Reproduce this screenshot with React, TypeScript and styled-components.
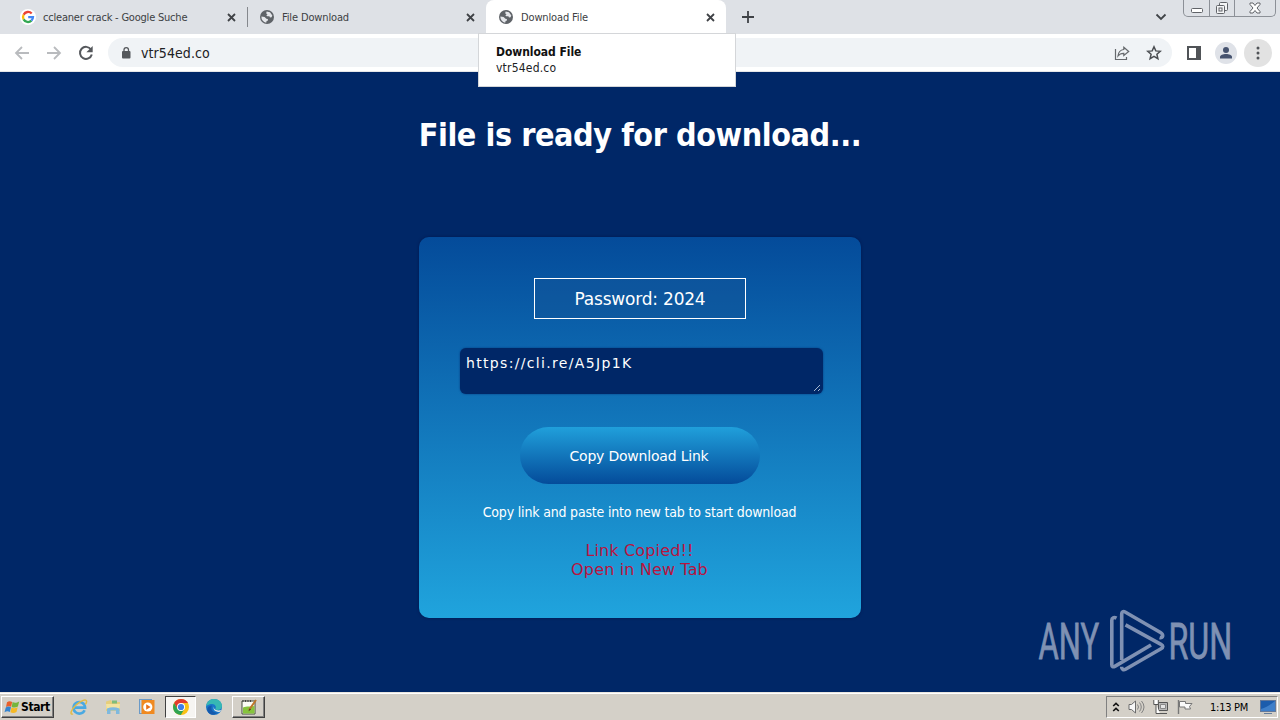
import { Fragment } from "react";
import styled, { createGlobalStyle } from "styled-components";

const GlobalStyle = createGlobalStyle`
  * {
    box-sizing: border-box;
  }
  body {
    margin: 0;
    overflow: hidden;
  }
  svg {
    display: block;
    flex: none;
  }
`;

const Screen = styled.div`
  width: 1280px;
  height: 720px;
  display: flex;
  flex-direction: column;
  position: relative;
  overflow: hidden;
  background-color: #002767;
  font-family: "DejaVu Sans Condensed", "DejaVu Sans", sans-serif;
`;

const TabStrip = styled.div`
  height: 34px;
  flex: none;
  display: flex;
  align-items: flex-start;
  padding-left: 8px;
  background-color: #dee1e6;
`;

const Tab = styled.div<{ $active?: boolean; $width: number }>`
  width: ${(props) => props.$width}px;
  height: 34px;
  display: flex;
  align-items: center;
  padding: 0 10px 0 12px;
  border-radius: 8px 8px 0 0;
  background-color: ${(props) => (props.$active ? "#ffffff" : "transparent")};
`;

const TabTitle = styled.span<{ $spacing: number }>`
  flex: 1;
  margin-left: 7px;
  padding-top: 1px;
  font-size: 11px;
  line-height: 14px;
  white-space: nowrap;
  color: #3c4043;
  letter-spacing: ${(props) => props.$spacing}px;
`;

const Separator = styled.div`
  width: 1px;
  height: 20px;
  margin: 7px -1px 0 0;
  background-color: #85888d;
`;

const NewTab = styled.div`
  padding: 11px 0 0 16px;
`;

const WindowTools = styled.div`
  margin-left: auto;
  display: flex;
  gap: 16px;
  padding-right: 4px;
`;

const ChevronBox = styled.div`
  padding-top: 12px;
`;

const WindowButtons = styled.div`
  display: flex;
  width: 93px;
  height: 17px;
  border: 1px solid #8c9097;
  border-top: 0;
  border-radius: 0 0 5px 5px;
`;

const WindowButton = styled.div<{ $width: number }>`
  width: ${(props) => props.$width}px;
  display: flex;
  justify-content: center;
  padding-top: 1px;
  & + & {
    border-left: 1px solid #8c9097;
  }
`;

const Toolbar = styled.div`
  height: 38px;
  flex: none;
  display: flex;
  align-items: center;
  padding: 0 8px 0 14px;
  background-color: #ffffff;
  border-bottom: 1px solid #e4e6e8;
`;

const NavButtons = styled.div`
  display: flex;
  gap: 16px;
`;

const Omnibox = styled.div`
  width: 1065px;
  height: 29px;
  margin-left: 14px;
  display: flex;
  align-items: center;
  padding: 0 10px 0 12px;
  border-radius: 15px;
  background-color: #f0f3f6;
`;

const Url = styled.span`
  flex: 1;
  margin-left: 9px;
  font-size: 14px;
  letter-spacing: 0.08px;
  color: #202124;
`;

const OmniboxIcons = styled.div`
  display: flex;
  gap: 16px;
`;

const ToolbarIcons = styled.div`
  display: flex;
  align-items: center;
  gap: 13px;
  padding-left: 14px;
`;

const RoundButton = styled.div<{ $size: number; $color: string }>`
  width: ${(props) => props.$size}px;
  height: ${(props) => props.$size}px;
  display: flex;
  align-items: center;
  justify-content: center;
  border-radius: 50%;
  background-color: ${(props) => props.$color};
`;

const MenuButton = styled(RoundButton)`
  margin-left: -6px;
`;

const HoverCard = styled.div`
  position: absolute;
  top: 33px;
  left: 478px;
  width: 258px;
  height: 54px;
  padding: 10px 17px;
  border: 1px solid #d4d6d9;
  background-color: #ffffff;
  color: #202124;
`;

const HoverTitle = styled.div`
  font-size: 12px;
  line-height: 16px;
  font-weight: bold;
  letter-spacing: -0.05px;
  color: #111;
`;

const HoverUrl = styled.div`
  font-size: 12px;
  line-height: 16px;
  letter-spacing: 0.2px;
`;

const Page = styled.main`
  flex: 1;
  display: flex;
  flex-direction: column;
  align-items: center;
  font-family: "DejaVu Sans", sans-serif;
  color: #ffffff;
`;

const Heading = styled.h1`
  margin: 43px 0 0;
  font-family: "DejaVu Sans Condensed", "DejaVu Sans", sans-serif;
  font-size: 32px;
  line-height: 40px;
  font-weight: bold;
  white-space: nowrap;
  letter-spacing: -0.43px;
`;

const Card = styled.section`
  width: 442px;
  height: 381px;
  margin-top: 82px;
  padding-top: 41px;
  display: flex;
  flex-direction: column;
  align-items: center;
  border-radius: 10px;
  background: linear-gradient(#044b9a, #20a4dd);
  box-shadow: 0 0 3px rgba(0, 20, 70, 0.7);
`;

const Password = styled.div`
  width: 212px;
  height: 41px;
  border: 1px solid #ffffff;
  background-color: rgba(20, 84, 150, 0.45);
  text-align: center;
  font-size: 17px;
  line-height: 40px;
  white-space: nowrap;
  letter-spacing: -0.2px;
`;

const LinkBox = styled.div`
  width: 363px;
  height: 46px;
  margin: 29px 0 0 3px;
  padding: 6px 2px 2px 6px;
  display: flex;
  border-radius: 6px;
  background-color: #002767;
  box-shadow: 0 0 2px #063576;
  font-size: 14px;
  line-height: 18px;
  letter-spacing: 1.33px;
`;

const Resizer = styled.div`
  margin-left: auto;
  align-self: flex-end;
`;

const CopyButton = styled.button`
  width: 240px;
  height: 57px;
  margin-top: 33px;
  padding: 0 2px 0 0;
  border: 0;
  border-radius: 29px;
  background: linear-gradient(#20a0db, #044b9a);
  color: #ffffff;
  font-family: inherit;
  font-size: 14px;
  letter-spacing: -0.2px;
`;

const Hint = styled.p`
  margin: 18px 0 0;
  padding-right: 1px;
  font-family: "DejaVu Sans Condensed", "DejaVu Sans", sans-serif;
  font-size: 14px;
  line-height: 20px;
  white-space: nowrap;
  letter-spacing: -0.18px;
`;

const Copied = styled.p`
  margin: 19px 0 0;
  padding-right: 1px;
  text-align: center;
  font-size: 16px;
  line-height: 19px;
  letter-spacing: 0.15px;
  color: #b8143f;
`;

const Watermark = styled.div`
  position: absolute;
  left: 1036px;
  top: 608px;
`;

const Taskbar = styled.footer`
  height: 28px;
  flex: none;
  display: flex;
  align-items: center;
  padding: 2px 2px 1px 1px;
  border-top: 1px solid #e9e6e0;
  background-color: #d4d0c8;
  box-shadow: inset 0 1px #ffffff;
`;

const StartButton = styled.div`
  width: 53px;
  height: 22px;
  display: flex;
  align-items: center;
  padding-left: 2px;
  border: 1px solid;
  border-color: #ffffff #404040 #404040 #ffffff;
  box-shadow: inset -1px -1px #808080;
  font-size: 12px;
  font-weight: bold;
  letter-spacing: -0.4px;
  color: #000000;
`;

const QuickLaunch = styled.div`
  display: flex;
  align-items: center;
  padding-left: 8px;
`;

const TaskButton = styled.div<{ $look?: "pressed" | "raised" }>`
  width: 34px;
  height: 22px;
  display: flex;
  align-items: center;
  justify-content: center;
  border: 1px solid transparent;
  ${(props) =>
    props.$look === "pressed" &&
    `
    width: 31px;
    margin-left: 1px;
    margin-right: 1px;
    border-color: #404040 #ffffff #ffffff #404040;
    background-color: #f6f5f2;
  `}
  ${(props) =>
    props.$look === "raised" &&
    `
    width: 33px;
    margin-left: 1px;
    border-color: #ffffff #404040 #404040 #ffffff;
    box-shadow: inset -1px -1px #808080;
  `}
`;

const Tray = styled.div`
  width: 172px;
  height: 22px;
  margin-left: auto;
  display: flex;
  align-items: center;
  padding-left: 5px;
  border: 1px solid;
  border-color: #808080 #ffffff #ffffff #808080;
`;

const TrayIcons = styled.div`
  display: flex;
  align-items: center;
  gap: 8px;
`;

const Clock = styled.span`
  width: 42px;
  margin: 0 8px 0 17px;
  font-size: 11px;
  letter-spacing: -0.25px;
  white-space: nowrap;
  color: #000000;
`;

const GoogleIcon = () => (
  <svg width="16" height="16" viewBox="0 0 16 16">
    <circle cx="8" cy="8" r="8" fill="#fff" />
    <g fill="none" strokeWidth="2.3">
      <path d="M11.7 4.5A5 5 0 0 0 3.6 5.7" stroke="#ea4335" />
      <path d="M3.6 5.7A5 5 0 0 0 3.6 10.4" stroke="#fbbc05" />
      <path d="M3.6 10.4A5 5 0 0 0 11.4 11.7" stroke="#34a853" />
      <path d="M11.4 11.7A5 5 0 0 0 13 8.1H8.2" stroke="#4285f4" />
    </g>
  </svg>
);

const GlobeIcon = () => (
  <svg width="16" height="16" viewBox="0 0 16 16">
    <circle cx="8" cy="8" r="7" fill="#5f6368" />
    <path
      d="M7.6 2.6 11 3.2 13.3 6.4 12.6 8.3 11 8.6 10.4 7.3H8.3L7.3 6.3 8.6 5.2 7.2 4.6ZM2.4 7.5 5.6 7.9 7.4 9.7 8.8 10 9 11.5 7.6 12 7.2 13.7A5.8 5.8 0 0 1 2.4 7.5Z"
      fill="#e4e6ea"
    />
  </svg>
);

const CloseIcon = () => (
  <svg width="11" height="11" viewBox="0 0 11 11">
    <path d="m2 2 7 7M9 2 2 9" stroke="#3f4246" strokeWidth="1.8" />
  </svg>
);

const ArrowIcon = ({ flip }: { flip?: boolean }) => (
  <svg width="16" height="16" viewBox="0 0 16 16">
    <path
      d="M15 8H2.5M8 2 2 8l6 6"
      transform={flip ? "translate(16 0) scale(-1 1)" : undefined}
      fill="none"
      stroke="#b9bbbe"
      strokeWidth="1.8"
    />
  </svg>
);

const ReloadIcon = () => (
  <svg width="16" height="16" viewBox="0 0 16 16">
    <path
      d="M13 4.5A6 6 0 1 0 13.8 9.5"
      fill="none"
      stroke="#55585c"
      strokeWidth="2"
    />
    <path d="M14.7 1v6.3H8.4Z" fill="#55585c" />
  </svg>
);

const LockIcon = () => (
  <svg width="12" height="14" viewBox="0 0 12 14">
    <rect x="2" y="5" width="8.5" height="7.5" rx="1" fill="#55585c" />
    <path
      d="M4 5.5V3.8a2.2 2.2 0 0 1 4.5 0v1.7"
      fill="none"
      stroke="#55585c"
      strokeWidth="1.3"
    />
  </svg>
);

const ShareIcon = () => (
  <svg width="16" height="16" viewBox="0 0 16 16">
    <g fill="none" stroke="#66696d" strokeWidth="1.2">
      <path d="M1.5 4v10.5h11V12" />
      <path d="M9.8 2.2 14.7 6.5 9.8 10.5V8.3C7 8.2 5.3 9.2 4 11c.3-3.7 2.2-6 5.8-6.5Z" />
    </g>
  </svg>
);

const StarIcon = () => (
  <svg width="16" height="16" viewBox="0 0 16 16">
    <path
      d="m8 1.8 1.8 4.1 4.5.4-3.4 3 1 4.4L8 11.4l-3.9 2.3 1-4.4-3.4-3 4.5-.4Z"
      fill="none"
      stroke="#4b4e52"
      strokeWidth="1.5"
    />
  </svg>
);

const PanelIcon = () => (
  <svg width="16" height="16" viewBox="0 0 16 16">
    <path d="M1 1h14v14H1ZM3 3v10h7V3Z" fill="#505357" fillRule="evenodd" />
  </svg>
);

const PersonIcon = () => (
  <svg width="14" height="14" viewBox="0 0 14 14">
    <circle cx="7" cy="4" r="3" fill="#46536f" />
    <path d="M1 12.5V11c0-2.1 3-3 6-3s6 .9 6 3v1.5Z" fill="#46536f" />
  </svg>
);

const DotsIcon = () => (
  <svg width="4" height="14" viewBox="0 0 4 14">
    <g fill="#505357">
      <circle cx="2" cy="2" r="1.5" />
      <circle cx="2" cy="7" r="1.5" />
      <circle cx="2" cy="12" r="1.5" />
    </g>
  </svg>
);

const AnyRunLogo = () => (
  <svg width="236" height="70" viewBox="0 0 236 70">
    <g
      fill="#7f91b3"
      stroke="#7f91b3"
      strokeWidth="0.8"
      fontFamily="Roboto, sans-serif"
      fontSize="50"
    >
      <text transform="translate(2.5 51) scale(0.62 1)">ANY</text>
      <text transform="translate(132.5 51) scale(0.645 1)">RUN</text>
    </g>
    <g
      fill="none"
      stroke="#7f91b3"
      strokeWidth="3.6"
      strokeLinejoin="round"
    >
      <path d="M80.5 10.2c-2.6-1.4-4.7-.4-4.7 2v44.5c0 2 1.3 2.6 3 1.7L115 37" />
      <path d="M85.7 52V6c0-2.2 1.6-3 3.4-2l35.4 20.5c3.4 2 2.6 6-.9 5" />
      <path d="M89.5 16.8 125 36.4c2.4 1.3 2.4 3 0 4.4L89.5 61.2c-2 1.2-3.9.2-3.9-2.4" />
    </g>
  </svg>
);

const FlagLogo = () => (
  <svg width="17" height="16" viewBox="0 0 16 16">
    <path d="M2.5 3.2C4.3 1.8 6 2 7.7 3L6.6 7.8C5 6.9 3.2 6.9 1.5 8.1Z" fill="#e9602b" />
    <path d="M8.1 3.1c1.8 1 3.9 1 6.6-.6l-1.3 5c-2 1.2-4.3 1.4-6.2.4Z" fill="#75b53b" />
    <path d="M1.3 8.5C3 7.3 4.7 7.4 6.5 8.3l-1.2 4.6C3.6 12 2 12 0 13.2Z" fill="#3484d0" />
    <path d="M7 8.4c1.8 1 3.9 1 6.2-.2L12 13c-2 1.2-4.2 1.2-6.1.2Z" fill="#f6b925" />
  </svg>
);

const ExplorerIcon = () => (
  <svg width="18" height="18" viewBox="0 0 18 18">
    <path
      d="M14.6 12.2A5.8 5.8 0 1 1 15.1 9.6H5"
      fill="none"
      stroke="#4aa9e2"
      strokeWidth="2.6"
    />
    <path
      d="M3 15.8C-.5 17.5.8 11.8 6 7c4.8-4.4 10.8-6.8 10.6-3.2-.1 1-.6 1.8-1.2 2.6"
      fill="none"
      stroke="#e3bb45"
      strokeWidth="1.5"
    />
  </svg>
);

const FolderIcon = () => (
  <svg width="18" height="18" viewBox="0 0 18 18">
    <path d="M2 3.5 7 2l1 2h8v9H2Z" fill="#e6ce7c" />
    <path d="M8 2.5h5v3H8Z" fill="#7fbd7a" />
    <path d="M2 6h14l-.5 5h-13Z" fill="#f3e3a0" />
    <path d="M3 10.5q6-2.5 12.5 0V16H12v-3.5H6.5V16H3Z" fill="#7fb9de" />
  </svg>
);

const PlayerIcon = () => (
  <svg width="18" height="18" viewBox="0 0 18 18">
    <rect x="1.5" y="1.5" width="12" height="14" fill="#b7d1ea" stroke="#6a9ac8" />
    <rect x="3.5" y="2" width="13" height="14" fill="#f08a20" />
    <circle cx="9.8" cy="9" r="4.6" fill="#fff" />
    <path d="m8.2 6.2 4.4 2.8-4.4 2.8Z" fill="#e8701a" />
  </svg>
);

const ChromeIcon = () => (
  <svg width="18" height="18" viewBox="0 0 18 18">
    <circle cx="9" cy="9" r="8" fill="#fbc116" />
    <path d="M2.1 5A8 8 0 0 1 16 5H9L5.6 11Z" fill="#e33b2e" />
    <path d="M2.1 5A8 8 0 0 0 8.8 17l3.6-6H5.6Z" fill="#30a452" />
    <circle cx="9" cy="9" r="4" fill="#fff" />
    <circle cx="9" cy="9" r="3.1" fill="#3f7ee8" />
  </svg>
);

const EdgeIcon = () => (
  <svg width="18" height="18" viewBox="0 0 18 18">
    <circle cx="9" cy="9" r="8" fill="#1876c9" />
    <path
      d="M1.2 8C2 3.5 5 1 9 1c4.8 0 8 3.3 8 7 0 2.8-2.5 4.2-5 4-2-.2-2-1.2-1.2-2C11.5 7 8 5.4 5 6.2 3 6.7 1.8 7.5 1.2 8Z"
      fill="#36b8b4"
    />
    <path
      d="M7 7.5C5 10.8 7.7 15 12.5 14.6 10.5 16.8 7 17.3 4.5 15.7 1 13 1.6 7.6 7 7.5Z"
      fill="#1459ac"
    />
    <path d="M9 8.6c-.8 2.8 2.4 4.6 7.2 3.5l-1.2 1.6C10.8 14.6 7.4 12 9 8.6Z" fill="#d8e4e6" />
  </svg>
);

const NotepadIcon = () => (
  <svg width="18" height="18" viewBox="0 0 18 18">
    <path d="M2 3h13v13H2Z" fill="#fbfdf5" stroke="#444a3c" />
    <path d="M3 9.5c4-2 7-.5 11.5-1.5v7.5H3Z" fill="#86c43c" />
    <path d="M3 2v2M5.5 2v2M8 2v2M10.5 2v2" stroke="#444" />
    <path d="M16 2 9 12" stroke="#bd7629" strokeWidth="2" />
    <path d="m9.8 10.5-1.4 2.7 2.5-1.7Z" fill="#382c1d" />
  </svg>
);

const TrayChevron = () => (
  <svg width="8" height="12" viewBox="0 0 8 12">
    <path
      d="m1.2 5 2.8-2.6L6.8 5M1.2 10 4 7.4 6.8 10"
      fill="none"
      stroke="#111"
      strokeWidth="1.6"
    />
  </svg>
);

const SpeakerIcon = () => (
  <svg width="17" height="16" viewBox="0 0 17 16">
    <path d="M1 5.5h2.5L7.5 2v12l-4-3.5H1Z" fill="#f7f7f7" stroke="#6c6c6c" />
    <path
      d="M9.5 5.5q2 2.5 0 5M11.5 3.5q3.5 4.5 0 9M13.5 2q5 6 0 12"
      fill="none"
      stroke="#818181"
    />
  </svg>
);

const NetworkIcon = () => (
  <svg width="16" height="16" viewBox="0 0 16 16">
    <path d="M5.5 3.5h9v8h-9ZM7 14.5h7" fill="#b8b8b8" stroke="#555" />
    <path d="M7.5 5.5h5v4h-5Z" fill="#e5e5e5" stroke="#888" />
    <path d="M.8 1v4.5h4.5V1M3 5v9.5h4" fill="#fff" stroke="#555" />
  </svg>
);

const FlagIcon = () => (
  <svg width="16" height="16" viewBox="0 0 16 16">
    <path d="M1.5 1v14" stroke="#777" strokeWidth="1.4" />
    <path
      d="M2.5 2.5h6v2h6.5l-2.5 3 1 2.5H8V8H2.5Z"
      fill="#fafafa"
      stroke="#777"
    />
  </svg>
);

const DesktopIcon = () => (
  <svg width="16" height="14" viewBox="0 0 16 14">
    <rect x=".5" y=".5" width="15" height="11" fill="#1c5cac" stroke="#63789a" />
    <path d="M1 9C6 8 10 5 15 1v10H1Z" fill="#3f7fc9" />
    <path d="M4 13.5h8" stroke="#667d9a" />
  </svg>
);

const tabs = [
  { title: "ccleaner crack - Google Suche", width: 239, spacing: -0.21, google: true },
  { title: "File Download", width: 239, spacing: -0.14 },
  { title: "Download File", width: 240, spacing: -0.14, active: true },
];

export default function App() {
  return (
    <Screen>
      <GlobalStyle />
      <TabStrip>
        {tabs.map((tab, index) => (
          <Fragment key={tab.title}>
            <Tab $active={tab.active} $width={tab.width}>
              {tab.google ? <GoogleIcon /> : <GlobeIcon />}
              <TabTitle $spacing={tab.spacing}>{tab.title}</TabTitle>
              <CloseIcon />
            </Tab>
            {index === 0 && <Separator />}
          </Fragment>
        ))}
        <NewTab>
          <svg width="12" height="12" viewBox="0 0 12 12">
            <path d="M6 0v12M0 6h12" stroke="#3f4246" strokeWidth="1.8" />
          </svg>
        </NewTab>
        <WindowTools>
          <ChevronBox>
            <svg width="12" height="10" viewBox="0 0 12 10">
              <path d="m1.5 2.5 4.5 4.5 4.5-4.5" fill="none" stroke="#404448" strokeWidth="1.8" />
            </svg>
          </ChevronBox>
          <WindowButtons>
            <WindowButton $width={25}>
              <svg width="14" height="14" viewBox="0 0 14 14">
                <rect x="1.5" y="7.5" width="11" height="4" rx="1" fill="#fff" stroke="#606368" />
              </svg>
            </WindowButton>
            <WindowButton $width={25}>
              <svg width="14" height="14" viewBox="0 0 14 14">
                <g fill="#f4f5f6" stroke="#606368">
                  <rect x="4.5" y="1.5" width="8" height="8" rx="1" />
                  <rect x="1.5" y="4.5" width="8" height="8" rx="1" />
                  <rect x="4" y="7" width="3" height="3" />
                </g>
              </svg>
            </WindowButton>
            <WindowButton $width={41}>
              <svg width="14" height="14" viewBox="0 0 14 14">
                <path
                  d="M2 2h3l2 2.5L9 2h3v1.5L9 7l3 3.5V12H9L7 9.5 5 12H2v-1.5L5 7 2 3.5Z"
                  fill="#fff"
                  stroke="#606368"
                />
              </svg>
            </WindowButton>
          </WindowButtons>
        </WindowTools>
      </TabStrip>

      <Toolbar>
        <NavButtons>
          <ArrowIcon />
          <ArrowIcon flip />
          <ReloadIcon />
        </NavButtons>
        <Omnibox>
          <LockIcon />
          <Url>vtr54ed.co</Url>
          <OmniboxIcons>
            <ShareIcon />
            <StarIcon />
          </OmniboxIcons>
        </Omnibox>
        <ToolbarIcons>
          <PanelIcon />
          <RoundButton $size={22} $color="#dfe2e8">
            <PersonIcon />
          </RoundButton>
          <MenuButton $size={28} $color="#e2e2e2">
            <DotsIcon />
          </MenuButton>
        </ToolbarIcons>
      </Toolbar>

      <Page>
        <Heading>File is ready for download...</Heading>
        <Card>
          <Password>Password: 2024</Password>
          <LinkBox>
            https://cli.re/A5Jp1K
            <Resizer>
              <svg width="8" height="8" viewBox="0 0 8 8">
                <path d="m1 7 6-6M5 7l2-2" stroke="#a5b7ce" />
              </svg>
            </Resizer>
          </LinkBox>
          <CopyButton>Copy Download Link</CopyButton>
          <Hint>Copy link and paste into new tab to start download</Hint>
          <Copied>
            Link Copied!!
            <br />
            Open in New Tab
          </Copied>
        </Card>
      </Page>

      <Taskbar>
        <StartButton>
          <FlagLogo />
          Start
        </StartButton>
        <QuickLaunch>
          <TaskButton>
            <ExplorerIcon />
          </TaskButton>
          <TaskButton>
            <FolderIcon />
          </TaskButton>
          <TaskButton>
            <PlayerIcon />
          </TaskButton>
          <TaskButton $look="pressed">
            <ChromeIcon />
          </TaskButton>
          <TaskButton>
            <EdgeIcon />
          </TaskButton>
          <TaskButton $look="raised">
            <NotepadIcon />
          </TaskButton>
        </QuickLaunch>
        <Tray>
          <TrayIcons>
            <TrayChevron />
            <SpeakerIcon />
            <NetworkIcon />
            <FlagIcon />
          </TrayIcons>
          <Clock>1:13 PM</Clock>
          <DesktopIcon />
        </Tray>
      </Taskbar>

      <HoverCard>
        <HoverTitle>Download File</HoverTitle>
        <HoverUrl>vtr54ed.co</HoverUrl>
      </HoverCard>
      <Watermark>
        <AnyRunLogo />
      </Watermark>
    </Screen>
  );
}
